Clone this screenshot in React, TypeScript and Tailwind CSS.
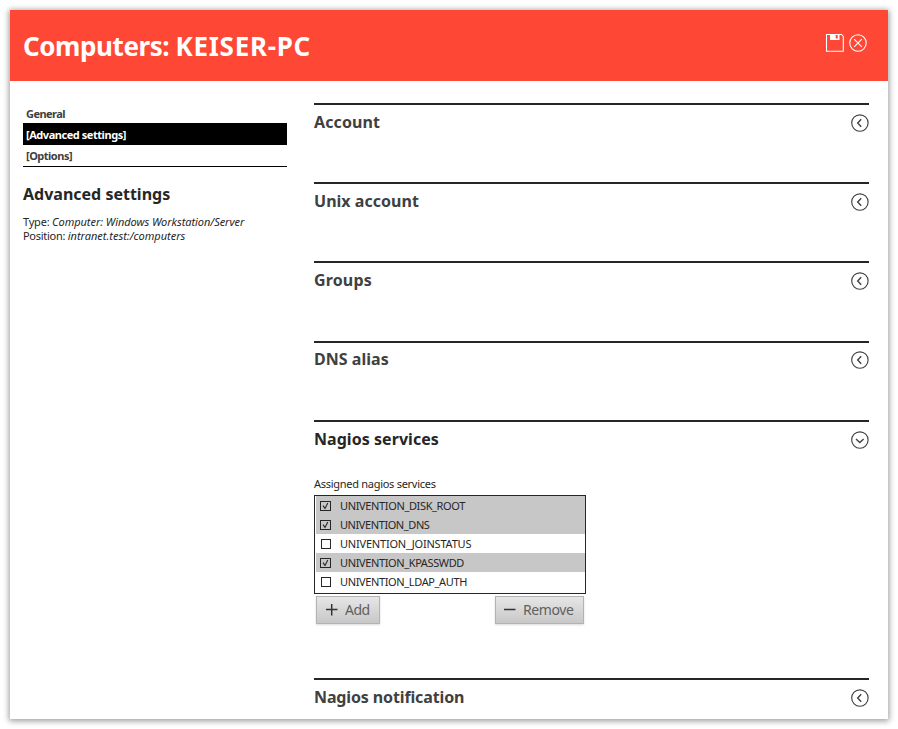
import type { ReactNode } from 'react';

type SectionProps = { title: string; height: string; tracking: string; open?: boolean; children?: ReactNode };

function Toggle({ open }: { open?: boolean }) {
  return (
    <svg className="mt-[8px] h-[20px] w-[19px]" viewBox="0 0 19 20" fill="none" stroke="#404040">
      <circle cx="9.9" cy="10" r="8.2" strokeWidth="1.15" />
      {open ? <path d="M6 9l3.8 3.5L13.6 9" strokeWidth="1.4" /> : <path d="M11.2 6.3L7.7 10l3.5 3.7" strokeWidth="1.4" />}
    </svg>
  );
}

function Section({ title, height, tracking, open, children }: SectionProps) {
  return (
    <section className={`border-t-2 border-[#262626] ${height}`}>
      <div className="flex items-start justify-between">
        <h2 className={`pt-[6px] text-[16px] leading-[22px] font-bold whitespace-nowrap ${tracking} ${open ? 'text-[#262626]' : 'text-[#404040]'}`}>
          {title}
        </h2>
        <Toggle open={open} />
      </div>
      {children}
    </section>
  );
}

function Check({ on }: { on: boolean }) {
  return (
    <svg className="mt-px h-[11px] w-[11px]" viewBox="0 0 11 11" fill="none" stroke="#262626">
      {on ? (
        <>
          <rect x="0.5" y="0.5" width="10" height="9" />
          <path d="M3 4.6l2 2.8L7.8 2" strokeWidth="1.1" />
        </>
      ) : (
        <rect x="1.5" y="0.5" width="9" height="9" />
      )}
    </svg>
  );
}

const services = [
  { name: 'UNIVENTION_DISK_ROOT', on: true, tracking: 'tracking-[-0.36px]' },
  { name: 'UNIVENTION_DNS', on: true, tracking: 'tracking-[-0.42px]' },
  { name: 'UNIVENTION_JOINSTATUS', on: false, tracking: 'tracking-[-0.2px]' },
  { name: 'UNIVENTION_KPASSWDD', on: true, tracking: 'tracking-[-0.38px]' },
  { name: 'UNIVENTION_LDAP_AUTH', on: false, tracking: 'tracking-[-0.37px]' },
];

const button =
  'flex h-[28px] items-center border border-[#b3b3b3] bg-linear-to-b from-[#e6e6e6] to-[#c8c8c8] pb-[2px] text-[14px] text-[#606060] shadow-[0_1px_2px_rgba(0,0,0,0.15)]';

export default function App() {
  return (
    <div className="h-[729px] w-[898px] overflow-hidden bg-white p-[10px] font-['Noto_Sans',sans-serif] text-[#262626]">
      <div className="h-[709px] bg-white shadow-[0_1px_6px_1px_rgba(0,0,0,0.4)]">
        <header className="flex h-[71px] items-start justify-between bg-[#ff4735] pr-[20px] pl-[13px] text-white">
          <h1 className="pt-[19px] text-[26px] leading-[34px] font-bold whitespace-nowrap">
            <span className="tracking-[-0.42px]">Computers: </span>
            <span className="tracking-[0.7px]">KEISER-PC</span>
          </h1>
          <div className="flex gap-[5px] pt-[23px]">
            <svg className="h-[20px] w-[19px]" viewBox="0 0 19 20" fill="none" stroke="white">
              <path d="M1.5 1.5H16.5L18.3 3.5V18.3H1.5Z" strokeWidth="1.1" />
              <path d="M5 1h9.5v6H5z M10.7 2v3.6h2V2z" fill="white" fillRule="evenodd" stroke="none" />
            </svg>
            <svg className="h-[20px] w-[19px]" viewBox="0 0 19 20" fill="none" stroke="white">
              <circle cx="9" cy="10" r="8.2" strokeWidth="1.1" />
              <path d="M5.2 6.2l7.6 7.6M12.8 6.2l-7.6 7.6" strokeWidth="1.1" />
            </svg>
          </div>
        </header>
        <div className="flex">
          <aside className="ml-[13px] w-[264px] pt-[24px]">
            <nav className="border-b border-black text-[11px] font-bold text-[#404040]">
              <div className="h-[18px] pl-[3px] leading-[18px] tracking-[-0.55px]">General</div>
              <div className="h-[22px] bg-black pl-[3px] leading-[24px] tracking-[-0.45px] text-white">[Advanced settings]</div>
              <div className="h-[21px] pl-[3px] leading-[22px] tracking-[-0.5px]">[Options]</div>
            </nav>
            <h2 className="pt-[16px] text-[16px] leading-[22px] font-bold">Advanced settings</h2>
            <div className="pt-[10px] text-[11px] leading-[14px] whitespace-nowrap">
              <div><span className="tracking-[-0.2px]">Type: </span><em className="tracking-[-0.05px]">Computer: Windows Workstation/Server</em></div>
              <div><span className="tracking-[-0.28px]">Position: </span><em>intranet.test:/computers</em></div>
            </div>
          </aside>
          <main className="ml-[27px] w-[555px] pt-[22px]">
            <Section title="Account" height="h-[79px]" tracking="tracking-[0.1px]" />
            <Section title="Unix account" height="h-[79px]" tracking="tracking-[0.03px]" />
            <Section title="Groups" height="h-[80px]" tracking="tracking-[0.15px]" />
            <Section title="DNS alias" height="h-[79px] [&>div]:-mt-px" tracking="tracking-[0.03px]" />
            <Section title="Nagios services" height="h-[258px]" tracking="tracking-[0.05px]" open>
              <div className="w-[272px] pt-[26px]">
                <div className="text-[11px] leading-[16px] tracking-[-0.28px]">Assigned nagios services</div>
                <ul className="mt-[3px] h-[99px] border border-[#262626] pl-px text-[11px]">
                  {services.map((s) => (
                    <li key={s.name} className={`flex h-[19px] items-center gap-[9px] pl-[4px] leading-[19px] ${s.on ? 'bg-[#c7c7c7]' : ''}`}>
                      <Check on={s.on} />
                      <span className={s.tracking}>{s.name}</span>
                    </li>
                  ))}
                </ul>
                <div className="flex justify-between pt-[2px] pr-[2px] pl-[2px]">
                  <button className={`${button} w-[64px] pl-[8px] tracking-[-0.5px]`}>
                    <svg className="mr-[7px] h-[13px] w-[13px]" viewBox="0 0 13 13" stroke="#333" strokeWidth="1.5"><path d="M1 6.5h11.5M6.7 1v11.5" /></svg>
                    Add
                  </button>
                  <button className={`${button} w-[89px] pl-[7px] tracking-[-0.4px]`}>
                    <svg className="mr-[7px] h-[13px] w-[13px]" viewBox="0 0 13 13" stroke="#333" strokeWidth="1.5"><path d="M1 6.5h11.5" /></svg>
                    Remove
                  </button>
                </div>
              </div>
            </Section>
            <Section title="Nagios notification" height="h-[41px]" tracking="tracking-[-0.13px]" />
          </main>
        </div>
      </div>
    </div>
  );
}
